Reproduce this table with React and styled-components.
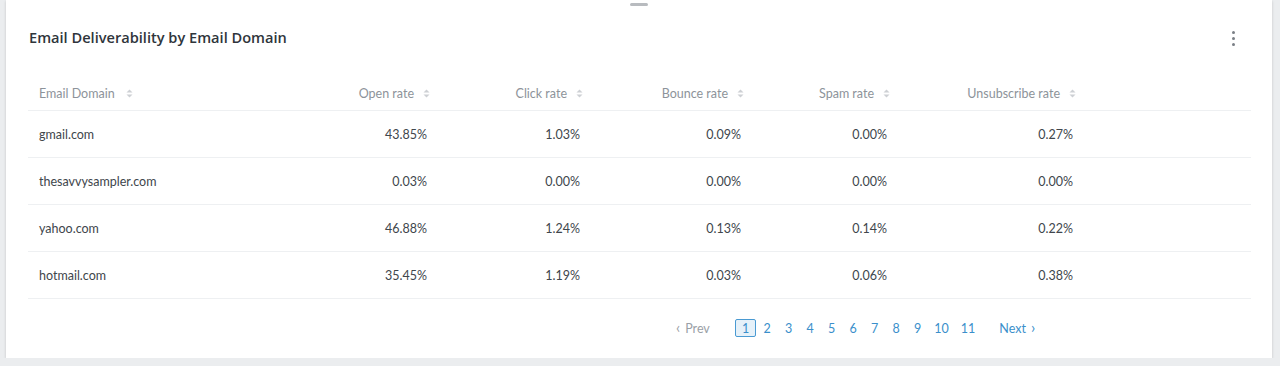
import React from "react";
import styled, { createGlobalStyle } from "styled-components";

const GlobalStyle = createGlobalStyle`
  html, body {
    margin: 0;
    padding: 0;
    background: #ebedef;
    font-family: Lato, "Liberation Sans", sans-serif;
  }
`;

// widths are in px, the last column takes what is left
const columns = [
  { key: "domain", label: "Email Domain", width: 200 },
  { key: "open", label: "Open rate", width: 203 },
  { key: "click", label: "Click rate", width: 153 },
  { key: "bounce", label: "Bounce rate", width: 161 },
  { key: "spam", label: "Spam rate", width: 146 },
  { key: "unsub", label: "Unsubscribe rate", width: 186 },
];

const rows = [
  ["gmail.com", "43.85%", "1.03%", "0.09%", "0.00%", "0.27%"],
  ["thesavvysampler.com", "0.03%", "0.00%", "0.00%", "0.00%", "0.00%"],
  ["yahoo.com", "46.88%", "1.24%", "0.13%", "0.14%", "0.22%"],
  ["hotmail.com", "35.45%", "1.19%", "0.03%", "0.06%", "0.38%"],
];

const pages = [1, 2, 3, 4, 5, 6, 7, 8, 9, 10, 11];

const SortIcon = () => (
  <SortSvg width="7" height="9" viewBox="0 0 7 9">
    <path d="M3.5 0.5 L6.5 3.5 L0.5 3.5 Z" fill="#cdd0d4" />
    <path d="M3.5 8.5 L6.5 5.5 L0.5 5.5 Z" fill="#cdd0d4" />
  </SortSvg>
);

const App = () => {
  return (
    <Page>
      <GlobalStyle />
      <Card>
        <Handle />
        <Header>
          <Title>Email Deliverability by Email Domain</Title>
          <Kebab>
            <span />
            <span />
            <span />
          </Kebab>
        </Header>
        <Table>
          <colgroup>
            {columns.map((c) => (
              <col key={c.key} style={{ width: c.width }} />
            ))}
            <col />
          </colgroup>
          <thead>
            <tr>
              {columns.map((c, i) => (
                <Th key={c.key} first={i === 0}>
                  <HeadInner first={i === 0}>
                    {c.label}
                    <SortIcon />
                  </HeadInner>
                </Th>
              ))}
              <Th />
            </tr>
          </thead>
          <tbody>
            {rows.map((r) => (
              <tr key={r[0]}>
                {r.map((v, i) => (
                  <Td key={i} first={i === 0}>
                    {v}
                  </Td>
                ))}
                <Td />
              </tr>
            ))}
          </tbody>
        </Table>
        <Pager>
          <PrevNext disabled>
            <Chevron>‹</Chevron>
            Prev
          </PrevNext>
          <Pages>
            {pages.map((p) => (
              <PageBtn key={p} active={p === 1}>
                {p}
              </PageBtn>
            ))}
          </Pages>
          <PrevNext>
            Next
            <Chevron>›</Chevron>
          </PrevNext>
        </Pager>
      </Card>
    </Page>
  );
};

export default App;

const Page = styled.div`
  padding: 0 8px 0 6px;
`;

const Card = styled.div`
  position: relative;
  background: #fff;
  height: 358px;
  box-sizing: border-box;
  box-shadow: 0 1px 3px rgba(0, 0, 0, 0.12), 0 1px 2px rgba(0, 0, 0, 0.06);
  padding: 0 21px 0 22px;
`;

const Handle = styled.div`
  position: absolute;
  top: 3px;
  left: 50%;
  margin-left: -9px;
  width: 18px;
  height: 3px;
  border-radius: 2px;
  background: #b8bbbf;
`;

const Header = styled.div`
  display: flex;
  align-items: center;
  justify-content: space-between;
  height: 76px;
  padding-right: 16px;
`;

const Title = styled.h2`
  margin: 0 0 2px;
  padding-left: 1px;
  font-family: "Open Sans", Lato, sans-serif;
  font-size: 14.6px;
  font-weight: 600;
  color: #2f353b;
`;

const Kebab = styled.div`
  display: flex;
  flex-direction: column;
  gap: 3px;
  span {
    width: 3px;
    height: 3px;
    border-radius: 50%;
    background: #7a7f86;
  }
`;

const Table = styled.table`
  width: 100%;
  border-collapse: collapse;
  table-layout: fixed;
  font-size: 12.5px;
  color: #40464c;
`;

const Th = styled.th`
  height: 34px;
  padding: 0 1px 0 ${(p) => (p.first ? "11px" : "0")};
  font-weight: 400;
  color: #8d939a;
  text-align: ${(p) => (p.first ? "left" : "right")};
  border-bottom: 1px solid #eef0f2;
  vertical-align: middle;
  white-space: nowrap;
`;

const HeadInner = styled.span`
  display: inline-flex;
  align-items: center;
  gap: ${(p) => (p.first ? "11px" : "9px")};
`;

const SortSvg = styled.svg`
  display: block;
`;

const Td = styled.td`
  height: 46px;
  padding: 0 4px 0 ${(p) => (p.first ? "11px" : "0")};
  text-align: ${(p) => (p.first ? "left" : "right")};
  border-bottom: 1px solid #eef0f2;
  white-space: nowrap;
`;

const Pager = styled.div`
  display: flex;
  align-items: center;
  margin-top: 19px;
  padding-left: 648px;
  height: 20px;
  font-size: 12.5px;
`;

const PrevNext = styled.span`
  display: inline-flex;
  align-items: center;
  gap: 5px;
  color: ${(p) => (p.disabled ? "#9aa0a6" : "#3a8fcb")};
`;

const Chevron = styled.span`
  font-size: 15px;
  line-height: 1;
  position: relative;
  top: -1px;
`;

const Pages = styled.div`
  display: flex;
  align-items: center;
  margin: 0 18px 0 25px;
`;

const PageBtn = styled.span`
  box-sizing: border-box;
  min-width: 21.5px;
  height: 18px;
  padding: 0 5px;
  display: inline-flex;
  align-items: center;
  justify-content: center;
  color: #3a8fcb;
  border: 1px solid ${(p) => (p.active ? "#4a9ad2" : "transparent")};
  background: ${(p) => (p.active ? "#e6f1f9" : "transparent")};
  border-radius: 2px;
`;
